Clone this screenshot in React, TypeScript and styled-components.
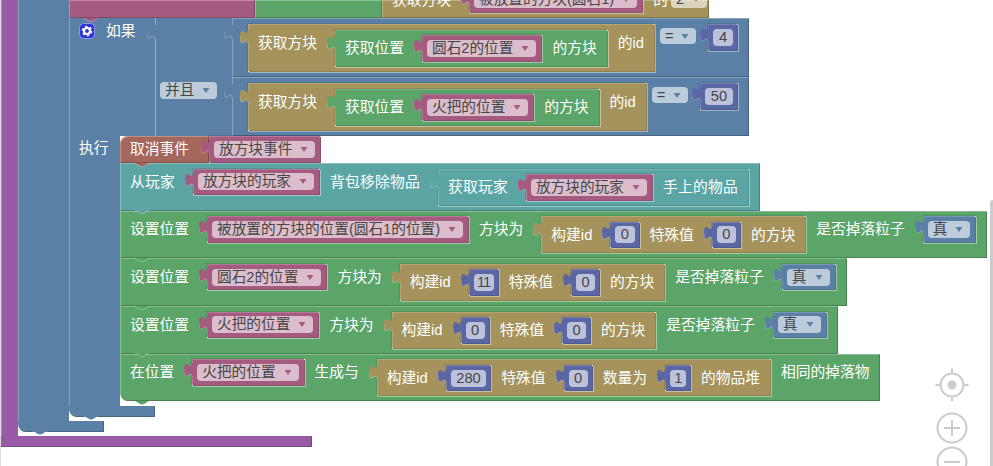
import React from "react";
import styled, { createGlobalStyle } from "styled-components";

const PURPLE = "#995ba5";
const BLUE = "#5b80a5";
const PINK = "#a55b80";
const GREEN = "#5ba568";
const TAN = "#a5935b";
const TEAL = "#5ba5a5";
const BROWN = "#a5675b";
const INDIGO = "#5b67a5";

const GlobalStyle = createGlobalStyle`
  html, body {
    margin: 0;
    background: #fff;
    overflow: hidden;
  }
`;

const Canvas = styled.div`
  position: relative;
  width: 993px;
  height: 466px;
  box-sizing: border-box;
  border-left: 1px solid #ddd;
  overflow: hidden;
  color: #fff;
  font-family: "Liberation Sans", "Noto Sans CJK SC", sans-serif;
  font-size: 14.67px;
`;

// shared look of every block: a lit top/left edge and a shaded bottom/right edge
const Block = styled.div<{ $c: string }>`
  position: relative;
  display: flex;
  align-items: flex-start;
  box-sizing: border-box;
  flex: none;
  background: ${(p) => p.$c};
  box-shadow: inset 1px 1px 0 rgba(255, 255, 255, 0.28),
    inset -1px -1px 0 rgba(0, 0, 0, 0.22);
`;

/* ---- c-shaped blocks ---- */

const CWrap = styled.div`
  display: flex;
  flex-direction: column;
  align-items: flex-start;
  width: max-content;
`;

const Mouth = styled.div`
  display: flex;
  align-items: stretch;
`;

const Spine = styled.div<{ $c: string; $w: number }>`
  width: ${(p) => p.$w}px;
  flex: none;
  box-sizing: border-box;
  padding: 0 0 0 10px;
  background: ${(p) => p.$c};
  box-shadow: inset 1px 0 0 rgba(255, 255, 255, 0.28);
  line-height: 24px;
  white-space: nowrap;
`;

const Stack = styled.div<{ $gap?: number }>`
  display: flex;
  flex-direction: column;
  align-items: flex-start;
  padding-bottom: ${(p) => p.$gap ?? 0}px;
`;

const Foot = styled(Block)<{ $w: number; $round?: boolean }>`
  width: ${(p) => p.$w}px;
  height: 10.5px;
  border-bottom-left-radius: ${(p) => (p.$round ? 8 : 0)}px;
  box-shadow: inset -1px -1px 0 rgba(0, 0, 0, 0.22);
`;

const BumpSvg = styled.svg<{ $left?: number }>`
  position: absolute;
  top: 100%;
  left: ${(p) => p.$left ?? 15}px;
  width: 14px;
  height: 4px;
  margin-top: -0.5px;
  z-index: 4;
`;

const Bump = ({ c, left }: { c: string; left?: number }) => (
  <BumpSvg $left={left} viewBox="0 0 14 4">
    <path d="M0 0 L5.5 3.5 H8.5 L14 0 z" fill={c} />
    <path d="M0 .3 L5.5 3.6 H8.5 L14 .3" fill="none" stroke="rgba(255,255,255,.3)" />
  </BumpSvg>
);

/* ---- text and fields ---- */

const Text = styled.span`
  position: relative;
  flex: none;
  height: 26px;
  font-size: 14.75px;
  line-height: 26px;
  white-space: nowrap;
`;

const Field = styled.span`
  display: inline-flex;
  align-items: center;
  flex: none;
  box-sizing: border-box;
  height: 17px;
  padding: 0 7px 0 5px;
  border-radius: 4px;
  background: rgba(255, 255, 255, 0.6);
  color: #464646;
  line-height: 17px;
  white-space: nowrap;
`;

const NumberField = styled(Field)<{ $w?: number }>`
  justify-content: center;
  padding: 0 5.5px;
  ${(p) => (p.$w ? `width: ${p.$w}px; letter-spacing: -1px;` : "")}
`;

const ArrowSvg = styled.svg`
  width: 8px;
  height: 5px;
  margin-left: 8px;
  flex: none;
`;

const Arrow = ({ c }: { c: string }) => (
  <ArrowSvg viewBox="0 0 8 5">
    <path d="M.5 0 H7.5 L4 5 z" fill={c} />
  </ArrowSvg>
);

/* ---- plugged value blocks ---- */

const Plug = styled(Block)<{ $gap?: number }>`
  margin-left: ${(p) => p.$gap ?? 18}px;
  box-shadow: inset 1px 1px 0 rgba(255, 255, 255, 0.18),
    inset -1px -1px 0 rgba(0, 0, 0, 0.12), 1px 1px 0 rgba(255, 255, 255, 0.42),
    -1px -1px 0 rgba(0, 0, 0, 0.1);

  & + ${Text} {
    margin-left: 10px;
  }

  /* the bright corner pixels where highlight lines meet */
  &::before,
  &::after {
    content: "";
    position: absolute;
    width: 1px;
    height: 1px;
    background: #fff;
  }
  &::before {
    top: 0;
    right: 0;
  }
  &::after {
    bottom: 0;
    left: 0;
  }
`;

const Holder = styled(Plug)`
  height: 26.5px;
  padding: 0 6px 0 5px;
  align-items: center;
`;

const NumberHolder = styled(Holder)`
  padding: 0 5px;
`;

const Compound = styled(Plug)`
  padding: 5.5px 11px 5px 10px;
`;

const TabSvg = styled.svg<{ $top?: number }>`
  position: absolute;
  left: -8px;
  top: ${(p) => p.$top ?? 6}px;
  width: 9px;
  height: 14px;
`;

const Tab = ({ c, top }: { c: string; top?: number }) => (
  <TabSvg $top={top} viewBox="0 0 9 14">
    <path d="M9 14 H8 c0,-9 -8,7 -8,-7 s8,2 8,-7 H9 z" fill={c} />
    <path d="M8 14 c0,-9 -8,7 -8,-7" fill="none" stroke="rgba(255,255,255,.25)" />
  </TabSvg>
);

const Drop = ({ c, children }: { c: string; children: React.ReactNode }) => (
  <Holder $c={c}>
    <Tab c={c} top={4} />
    <Field>
      {children}
      <Arrow c={c} />
    </Field>
  </Holder>
);

const Num = ({
  gap,
  w,
  children,
}: {
  gap?: number;
  w?: number;
  children: React.ReactNode;
}) => (
  <NumberHolder $c={INDIGO} $gap={gap}>
    <Tab c={INDIGO} top={4} />
    <NumberField $w={w}>{children}</NumberField>
  </NumberHolder>
);

const Value = ({
  c,
  gap,
  children,
}: {
  c: string;
  gap?: number;
  children: React.ReactNode;
}) => (
  <Compound $c={c} $gap={gap}>
    <Tab c={c} />
    {children}
  </Compound>
);

/* ---- statements ---- */

const TopRow = styled.div`
  display: flex;
  height: 18px;
  position: relative;
`;

const TopPink = styled(Block)`
  width: 186px;
`;

const TopGreen = styled(Block)`
  width: 127px;
`;

const TopTan = styled(Block)`
  align-items: flex-end;
  height: 18px;
  padding: 0 2px 5px 10px;
`;

const TopField = styled(Field)`
  margin: 0 0 5px 3px;
`;

const IfHeader = styled(Block)`
  align-items: stretch;
  box-shadow: inset 1px 0 0 rgba(255, 255, 255, 0.28);
`;

const IfLead = styled.div`
  display: flex;
  align-items: flex-start;
  gap: 11px;
  width: 86px;
  box-sizing: border-box;
  padding: 5px 0 0 10px;
`;

const IfWord = styled(Text)`
  height: 16px;
  line-height: 16px;
`;

const Logic = styled(Block)`
  align-items: stretch;
  box-shadow: inset 1px 0 0 rgba(255, 255, 255, 0.4);
`;

const LogicOp = styled.div`
  display: flex;
  align-items: flex-start;
  width: 77px;
  box-sizing: border-box;
  padding: 64px 0 0 5px;
`;

const Compare = styled(Block)`
  height: 59px;
  padding: 6px 11px 5px 0;
`;

const OpField = styled(Field)`
  margin: 4px 0 0 5px;
  height: 16px;
`;

const ActionRow = styled.div`
  display: flex;
  align-items: flex-start;
`;

const Cancel = styled(Block)`
  height: 27px;
  padding: 0 20px 0 10px;
  border-top-left-radius: 8px;
  font-size: 14.75px;
  line-height: 26px;
`;

const CancelPick = styled(Holder)`
  margin-left: 0;
`;

const Stmt = styled(Block)<{ $last?: boolean }>`
  height: 47.7px;
  padding: 5.5px 11px 5px 10px;
  border-bottom-left-radius: ${(p) => (p.$last ? 8 : 0)}px;
`;

// the labels of the inventory row run a touch wider than the others
const RemoveStmt = styled(Stmt)`
  ${Text} {
    letter-spacing: 0.25px;
  }
`;

/* ---- workspace controls ---- */

const ScrollThumb = styled.div`
  position: absolute;
  top: 200px;
  right: 0;
  width: 3px;
  height: 266px;
  border-radius: 3px 0 0 0;
  background: #ccc;
`;

const ControlSvg = styled.svg`
  position: absolute;
  left: 930px;
  top: 362px;
  width: 44px;
  height: 104px;
  fill: none;
  stroke: #ccc;
  stroke-width: 2;
`;

const GearSvg = styled.svg`
  width: 16px;
  height: 16px;
  flex: none;
`;

const Gear = () => (
  <GearSvg viewBox="0 0 16 16">
    <rect x=".5" y=".5" width="15" height="15" rx="4" fill="#2a35d8" stroke="#8f9be8" />
    <circle cx="8" cy="8" r="3" fill="none" stroke="#fff" strokeWidth="2.2" />
    <circle cx="8" cy="8" r="4.6" fill="none" stroke="#fff" strokeWidth="1.4" strokeDasharray="2.4 2.4" />
  </GearSvg>
);

const PlaceBlock = ({
  pos,
  n,
  nWidth,
}: {
  pos: string;
  n: string;
  nWidth?: number;
}) => (
  <>
    <Text>设置位置</Text>
    <Drop c={PINK}>{pos}</Drop>
    <Text>方块为</Text>
    <Value c={TAN}>
      <Text>构建id</Text>
      <Num w={nWidth}>{n}</Num>
      <Text>特殊值</Text>
      <Num>0</Num>
      <Text>的方块</Text>
    </Value>
    <Text>是否掉落粒子</Text>
    <Drop c={BLUE}>真</Drop>
  </>
);

const GetBlockId = ({ pos }: { pos: string }) => (
  <Value c={TAN} gap={16}>
    <Text>获取方块</Text>
    <Value c={GREEN}>
      <Text>获取位置</Text>
      <Drop c={PINK}>{pos}</Drop>
      <Text>的方块</Text>
    </Value>
    <Text>的id</Text>
  </Value>
);

export default function App() {
  return (
    <Canvas>
      <GlobalStyle />
      <CWrap>
        <Mouth>
          <Spine $c={PURPLE} $w={17} />
          <Stack $gap={4.5}>
            <CWrap>
              <Mouth>
                <Spine $c={BLUE} $w={51} />
                <Stack $gap={4.5}>
                  <TopRow>
                    <TopPink $c={PINK}>
                      <Bump c={PINK} />
                    </TopPink>
                    <TopGreen $c={GREEN} />
                    <TopTan $c={TAN}>
                      <Text>获取方块</Text>
                      <Drop c={PINK}>被放置的方块(圆石1)</Drop>
                      <Text>的</Text>
                      <TopField>
                        2<Arrow c={TAN} />
                      </TopField>
                    </TopTan>
                  </TopRow>

                  <CWrap>
                    <IfHeader $c={BLUE}>
                      <IfLead>
                        <Gear />
                        <IfWord>如果</IfWord>
                      </IfLead>
                      <Logic $c={BLUE}>
                        <Tab c={BLUE} top={7} />
                        <LogicOp>
                          <Field>
                            并且
                            <Arrow c={BLUE} />
                          </Field>
                        </LogicOp>
                        <div>
                          <Compare $c={BLUE}>
                            <Tab c={BLUE} top={7} />
                            <GetBlockId pos="圆石2的位置" />
                            <OpField>
                              =<Arrow c={BLUE} />
                            </OpField>
                            <Num gap={12}>4</Num>
                          </Compare>
                          <Compare $c={BLUE}>
                            <Tab c={BLUE} top={7} />
                            <GetBlockId pos="火把的位置" />
                            <OpField>
                              =<Arrow c={BLUE} />
                            </OpField>
                            <Num gap={12}>50</Num>
                          </Compare>
                        </div>
                      </Logic>
                    </IfHeader>
                    <Mouth>
                      <Spine $c={BLUE} $w={51}>
                        执行
                      </Spine>
                      <Stack $gap={5}>
                        <ActionRow>
                          <Cancel $c={BROWN}>
                            取消事件
                            <Bump c={BROWN} />
                          </Cancel>
                          <CancelPick $c={PINK}>
                            <Tab c={PINK} top={4} />
                            <Field>
                              放方块事件
                              <Arrow c={PINK} />
                            </Field>
                          </CancelPick>
                        </ActionRow>
                        <RemoveStmt $c={TEAL}>
                          <Text>从玩家</Text>
                          <Drop c={PINK}>放方块的玩家</Drop>
                          <Text>背包移除物品</Text>
                          <Value c={TEAL}>
                            <Text>获取玩家</Text>
                            <Drop c={PINK}>放方块的玩家</Drop>
                            <Text>手上的物品</Text>
                          </Value>
                          <Bump c={TEAL} />
                        </RemoveStmt>
                        <Stmt $c={GREEN}>
                          <PlaceBlock pos="被放置的方块的位置(圆石1的位置)" n="0" />
                          <Bump c={GREEN} />
                        </Stmt>
                        <Stmt $c={GREEN}>
                          <PlaceBlock pos="圆石2的位置" n="11" nWidth={20} />
                          <Bump c={GREEN} />
                        </Stmt>
                        <Stmt $c={GREEN}>
                          <PlaceBlock pos="火把的位置" n="0" />
                          <Bump c={GREEN} />
                        </Stmt>
                        <Stmt $c={GREEN} $last>
                          <Text>在位置</Text>
                          <Drop c={PINK}>火把的位置</Drop>
                          <Text>生成与</Text>
                          <Value c={TAN}>
                            <Text>构建id</Text>
                            <Num>280</Num>
                            <Text>特殊值</Text>
                            <Num>0</Num>
                            <Text>数量为</Text>
                            <Num w={16}>1</Num>
                            <Text>的物品堆</Text>
                          </Value>
                          <Text>相同的掉落物</Text>
                          <Bump c={GREEN} />
                        </Stmt>
                      </Stack>
                    </Mouth>
                    <Foot $c={BLUE} $w={85.7} $round>
                      <Bump c={BLUE} />
                    </Foot>
                  </CWrap>
                </Stack>
              </Mouth>
              <Foot $c={BLUE} $w={85.7} $round>
                <Bump c={BLUE} />
              </Foot>
            </CWrap>
          </Stack>
        </Mouth>
        <Foot $c={PURPLE} $w={310.7} />
      </CWrap>

      <ControlSvg viewBox="0 0 44 104">
        <circle cx="21" cy="23" r="11.5" />
        <path d="M21 6.5 V11 M21 35 V39.5 M4.5 23 H9 M33 23 H37.5" />
        <circle cx="21" cy="23" r="4.5" fill="#ccc" stroke="none" />
        <circle cx="21" cy="66" r="14.5" />
        <path d="M21 58 V74 M13 66 H29" />
        <circle cx="21" cy="100" r="14.5" />
        <path d="M13 100 H29" />
      </ControlSvg>
      <ScrollThumb />
    </Canvas>
  );
}
